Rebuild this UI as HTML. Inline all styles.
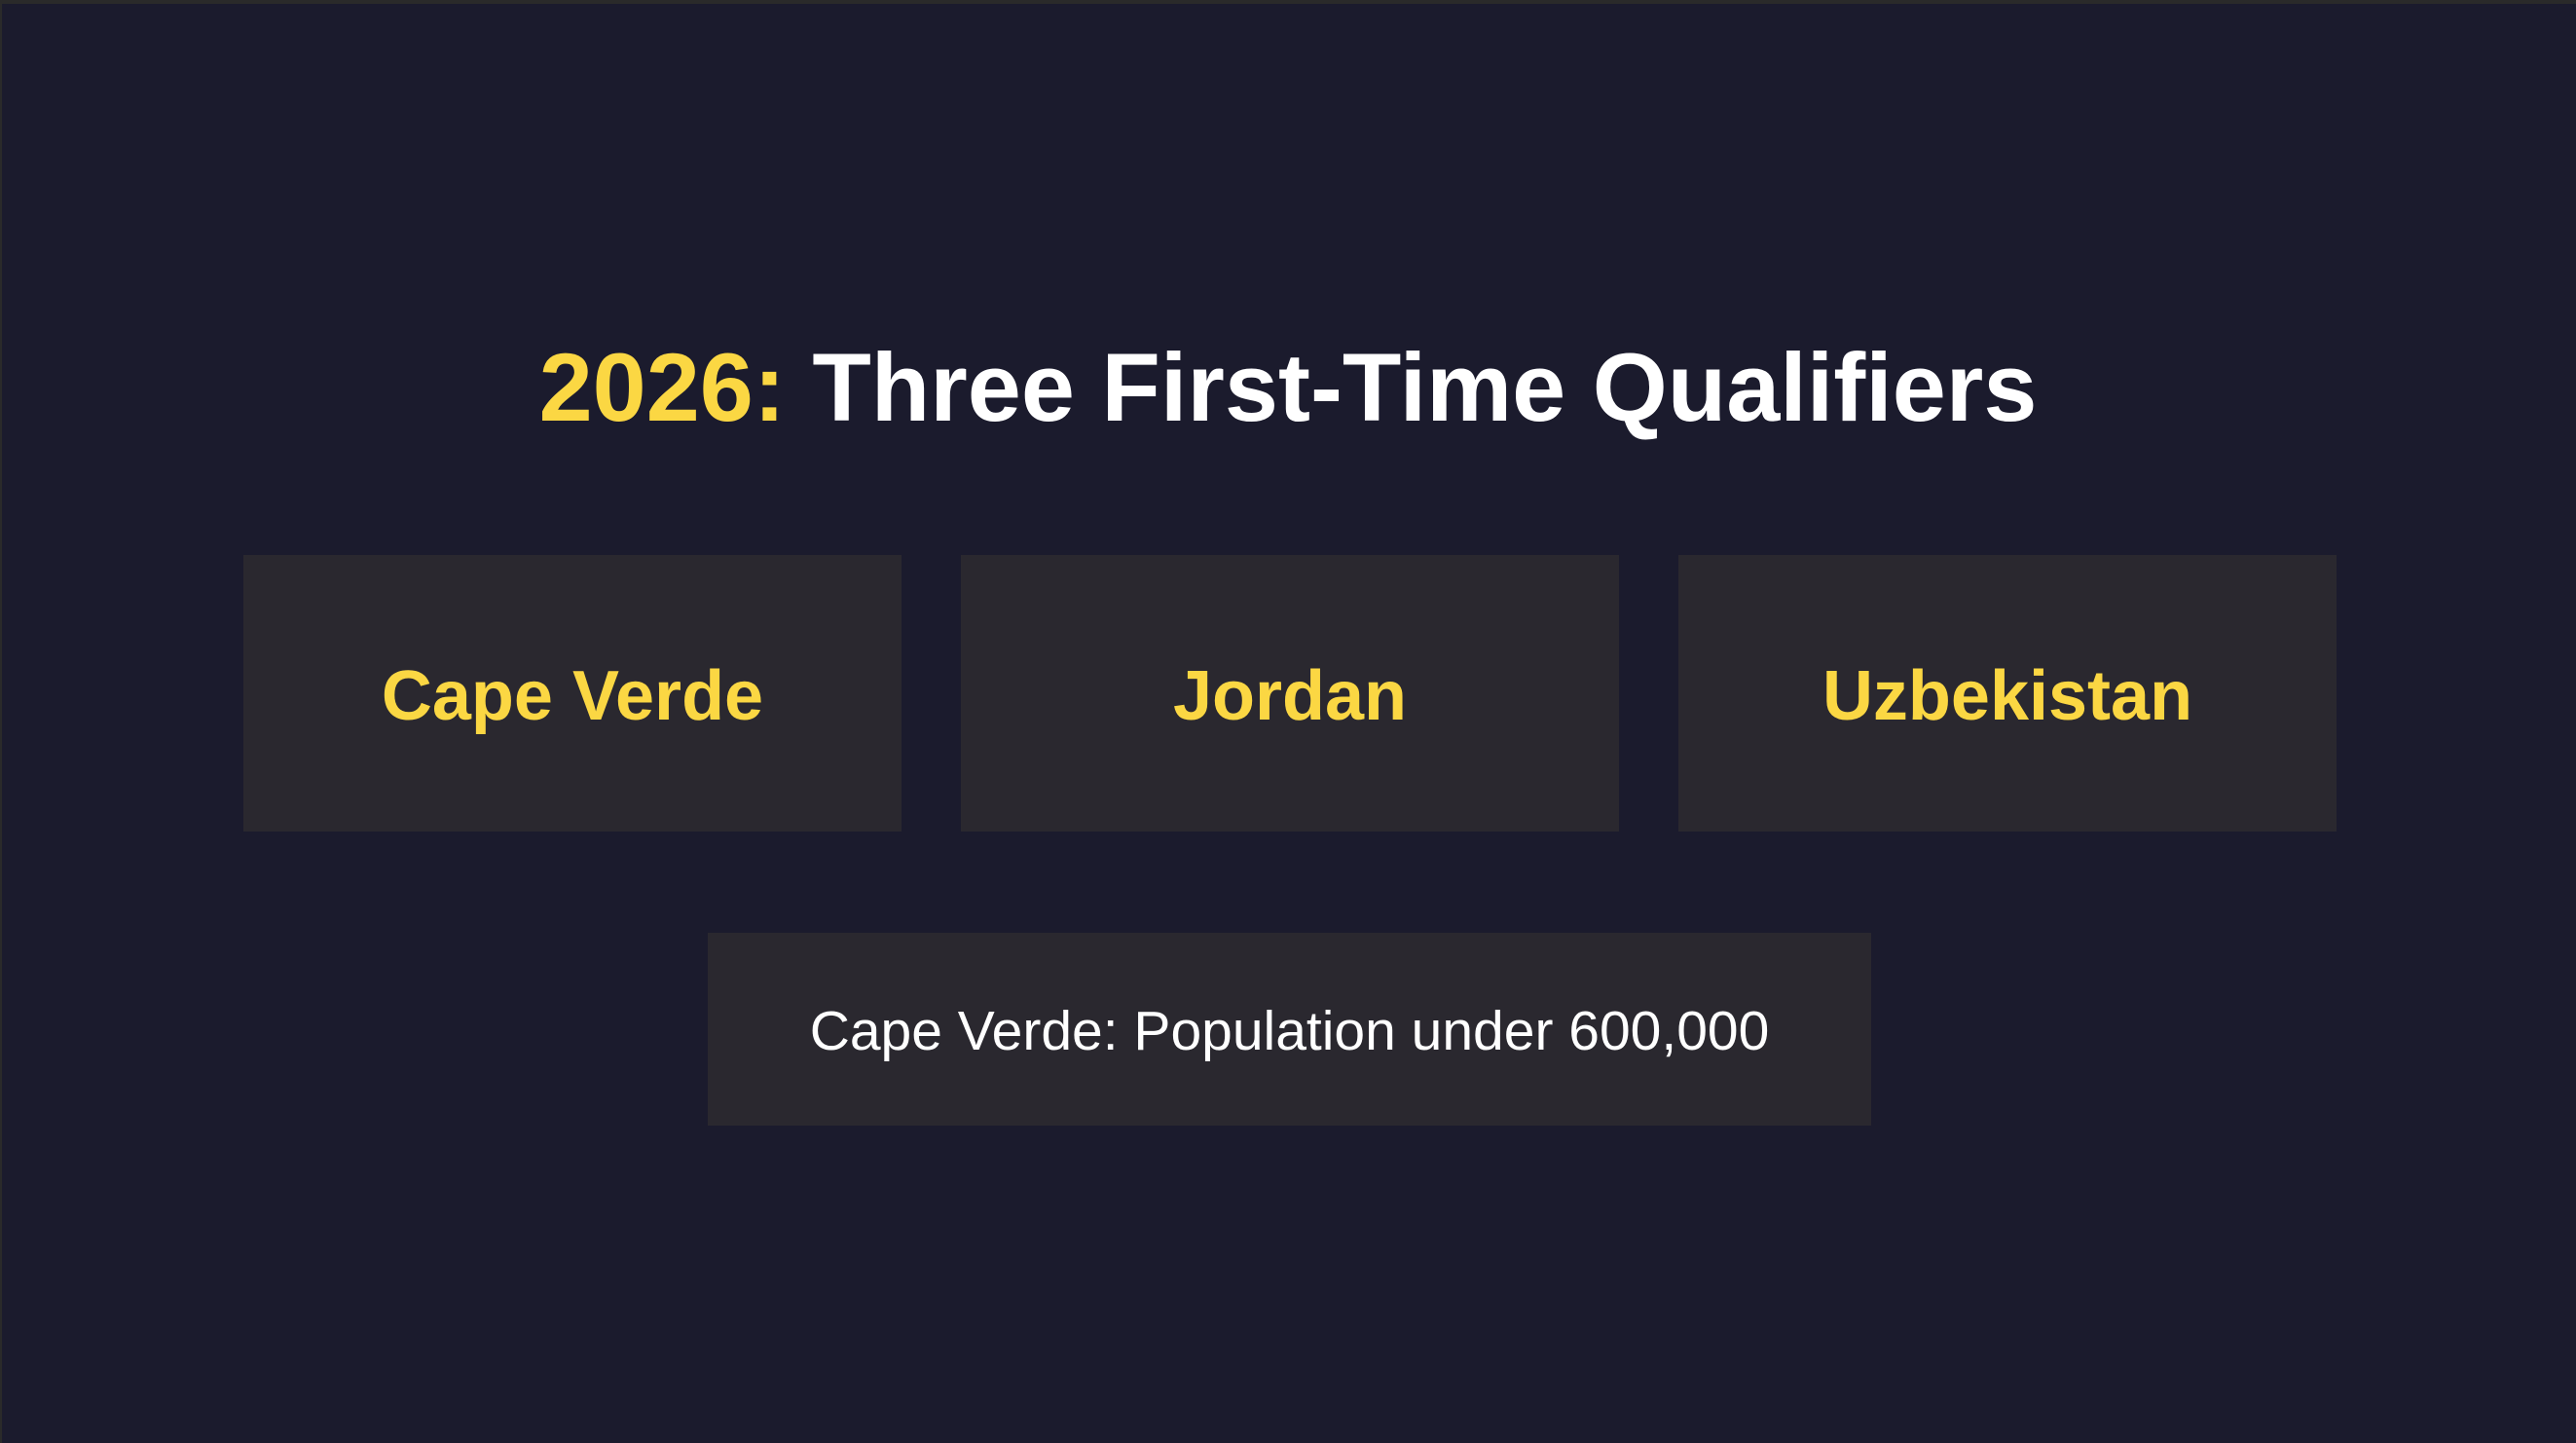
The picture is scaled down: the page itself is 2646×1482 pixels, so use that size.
<!DOCTYPE html>
<html><head><style>
html,body{margin:0;padding:0}
body{width:2646px;height:1482px;background:#2a2a2a;position:relative;overflow:hidden;font-family:"Liberation Sans",Arial,sans-serif}
.bg{position:absolute;left:2px;top:4px;right:0;bottom:0;background:#1b1b2d}
.t{position:absolute;left:0;width:2646px;top:338px;height:120px;line-height:120px;text-align:center;font-weight:bold;font-size:99px;color:#fff}
.t span{color:#fbd743}
.b{position:absolute;top:570px;height:284px;width:676px;background:#2a282f;color:#fbd743;font-weight:bold;font-size:72px;display:flex;align-items:center;justify-content:center;padding-top:6px;box-sizing:border-box}
.n{position:absolute;left:727px;top:958px;width:1195px;height:198px;background:#2a282f;color:#fff;font-size:57px;display:flex;align-items:center;justify-content:center;padding-top:4px;box-sizing:border-box}
</style></head><body>
<div class="bg"></div>
<div class="t"><span>2026:</span> Three First-Time Qualifiers</div>
<div class="b" style="left:250px">Cape Verde</div>
<div class="b" style="left:987px">Jordan</div>
<div class="b" style="left:1724px">Uzbekistan</div>
<div class="n">Cape Verde: Population under 600,000</div>
</body></html>
